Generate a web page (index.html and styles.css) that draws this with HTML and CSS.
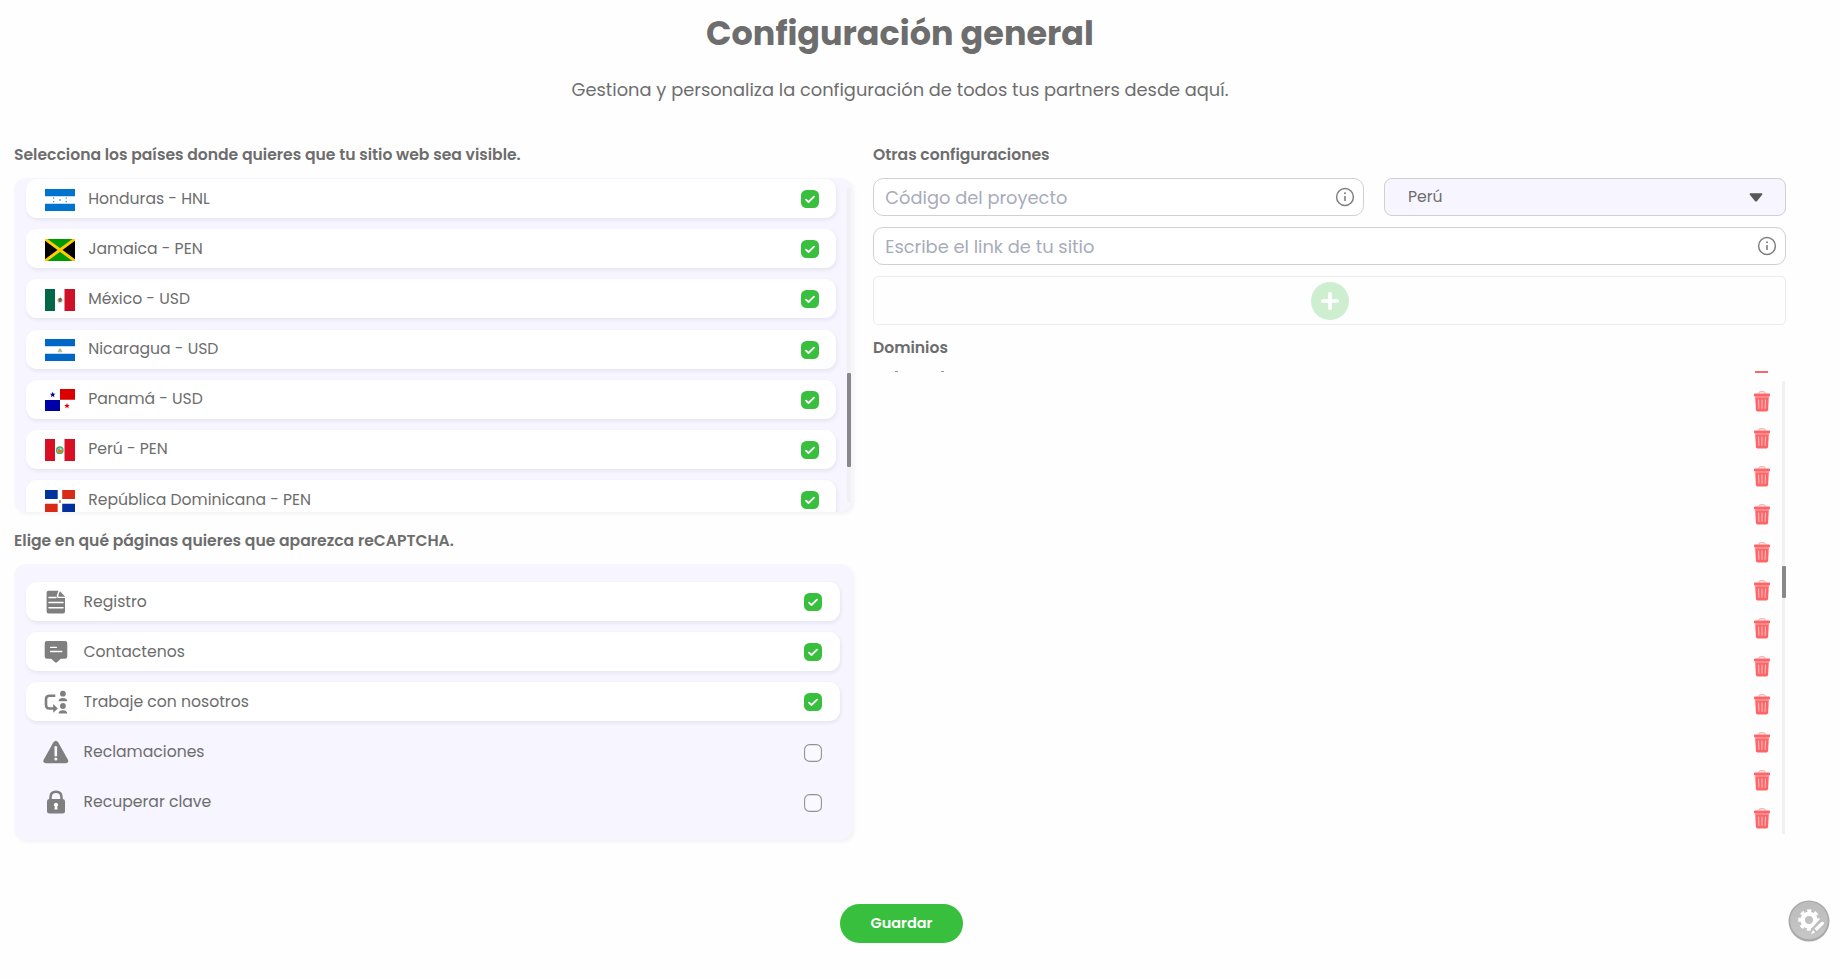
FILE: index.html
```html
<!DOCTYPE html>
<html lang="es">
<head>
<meta charset="utf-8">
<title>Configuración general</title>
<link rel="stylesheet" href="styles.css">
</head>
<body>
<svg class="defs" aria-hidden="true">
  <symbol id="check" viewBox="0 0 18 18"><rect width="18" height="18" rx="5.500" fill="#38bf3e"/><path d="M5 9.600 7.500 12 13 6.700" fill="none" stroke="#fff" stroke-width="1.800" stroke-linecap="round" stroke-linejoin="round"/></symbol>
  <symbol id="box" viewBox="0 0 18 18"><rect x=".6" y=".6" width="16.800" height="16.800" rx="5" fill="#faf9ff" stroke="#929292" stroke-width="1.100"/></symbol>
  <symbol id="info" viewBox="0 0 20 20"><circle cx="10" cy="10" r="8.400" fill="none" stroke="#7f7f7f" stroke-width="1.500"/><circle cx="10" cy="6.300" r="1" fill="#7f7f7f"/><path d="M10 9v5" stroke="#7f7f7f" stroke-width="1.600"/></symbol>
  <symbol id="trash" viewBox="0 0 16 21"><path d="M5 2.500V1.700Q5 .8 6 .8h4q1 0 1 .9v.8" fill="none" stroke="#ff9a9a" stroke-width="1"/><path d="M.8 2.500h14.400q.8 0 .8.800V5H0V3.300q0-.8.800-.8z" fill="#ff6467"/><path d="M.7 5h14.600v1.700H.7z" fill="#ff8d8f"/><path d="M1.200 6.500h13.600l-.7 12.300q-.1 1.700-1.600 1.700h-9q-1.500 0-1.600-1.700z" fill="#ff6467"/><path d="m4.500 8.500.4 9.200M8 8.500v9.200M11.500 8.500l-.4 9.200" stroke="#ffb5b5" stroke-width="1.200"/></symbol>
</svg>
<main class="page">
  <header class="head">
    <h1>Configuración general</h1>
    <p>Gestiona y personaliza la configuración de todos tus partners desde aquí.</p>
  </header>
  <div class="columns">
    <section class="left">
      <h2 class="h-paises">Selecciona los países donde quieres que tu sitio web sea visible.</h2>
      <div class="panel countries">
        <div class="rows">
          <div class="row"><svg class="flag" viewBox="0 0 30 22"><path fill="#fff" d="M0 0h30v22H0z"/><path fill="#0073cf" d="M0 0h30v7.300H0zM0 14.700h30V22H0z"/><path fill="#0073cf" d="M8 8.500h1.300v1.300H8zM8 12h1.300v1.300H8zM14.300 10.300h1.500v1.500h-1.500zM20.600 8.500h1.300v1.300h-1.300zM20.600 12h1.300v1.300h-1.300z" opacity=".75"/></svg><span>Honduras - HNL</span><svg class="tick"><use href="#check"/></svg></div>
          <div class="row"><svg class="flag" viewBox="0 0 30 22"><path fill="#090" d="M0 0h30v22H0z"/><path d="M0 0l15 11L0 22zM30 0 15 11l15 11z"/><path d="m0 0 30 22M30 0 0 22" stroke="#fc0" stroke-width="3"/></svg><span>Jamaica - PEN</span><svg class="tick"><use href="#check"/></svg></div>
          <div class="row"><svg class="flag" viewBox="0 0 30 22"><path fill="#fff" d="M0 0h30v22H0z"/><path fill="#006847" d="M0 0h10v22H0z"/><path fill="#ce1126" d="M19.500 0H30v22H19.500z"/><circle cx="15" cy="11.200" r="2.500" fill="#b5b99a"/><path d="m13.500 10 2-1.500 1.500 2-1 2-2 .5z" fill="#80603d"/></svg><span>México - USD</span><svg class="tick"><use href="#check"/></svg></div>
          <div class="row"><svg class="flag" viewBox="0 0 30 22"><path fill="#fff" d="M0 0h30v22H0z"/><path fill="#0067c6" d="M0 0h30v7.300H0zM0 14.700h30V22H0z"/><path fill="#a5bf7a" d="m15 8.800 2.500 4h-5z"/><path fill="#c8b98c" d="M12.800 12.400h4.400v.8h-4.400z"/></svg><span>Nicaragua - USD</span><svg class="tick"><use href="#check"/></svg></div>
          <div class="row"><svg class="flag" viewBox="0 0 30 22"><path fill="#fff" d="M0 0h30v22H0z"/><path fill="#db0000" d="M15 0h15v10.700H15z"/><path fill="#0000ab" d="M0 11h15v11H0z"/><path fill="#0000ab" d="m7.700 2.800.8 2h2.100L8.900 6.100l.6 2.100-1.800-1.300-1.800 1.300.6-2.100-1.700-1.300h2.100z"/><path fill="#d80000" d="m22 14 .8 2h2.100l-1.700 1.300.6 2.100-1.800-1.300-1.800 1.300.6-2.100-1.700-1.300h2.100z"/></svg><span>Panamá - USD</span><svg class="tick"><use href="#check"/></svg></div>
          <div class="row"><svg class="flag" viewBox="0 0 30 22"><path fill="#fff" d="M0 0h30v22H0z"/><path fill="#d91023" d="M0 0h10v22H0zM19.500 0H30v22H19.500z"/><circle cx="14.800" cy="11.200" r="3.200" fill="#b9d9b0" stroke="#55a85a" stroke-width="1.400"/><path d="M13 11h4v2.500h-4z" fill="#d8772e"/><path d="M13 9.500h2V11h-2z" fill="#5c9ecb"/></svg><span>Perú - PEN</span><svg class="tick"><use href="#check"/></svg></div>
          <div class="row"><svg class="flag" viewBox="0 0 30 22"><path fill="#fff" d="M0 0h30v22H0z"/><path fill="#00319c" d="M0 0h12.700v9H0zM17.200 13.700H30V22H17.200z"/><path fill="#d82a17" d="M17.200 0H30v9H17.200zM0 13.700h12.700V22H0z"/><path fill="#c39b8c" d="M14 10h2v3h-2z"/></svg><span>República Dominicana - PEN</span><svg class="tick"><use href="#check"/></svg></div>
        </div>
        <div class="track"><i></i></div>
      </div>
      <h2 class="h-captcha">Elige en qué páginas quieres que aparezca reCAPTCHA.</h2>
      <div class="panel captcha">
        <div class="row"><svg class="ico" viewBox="0 0 26 24"><path fill="#7f7f7f" d="M5.500.8H15.500l-1.700 4.400q-.4 2.800 2.400 2.800h5.800v13.500q0 1.900-1.900 1.900H5.500q-1.900 0-1.900-1.900V2.700Q3.600.8 5.500.8zM17 1.200l5.200 5.600H15.300q.2-3.500 1.700-5.600z"/><path d="M6 7.500h7M6 12.500h14M6 17.800h14" stroke="#fff" stroke-width="1.500" stroke-linecap="round"/></svg><span>Registro</span><svg class="tick"><use href="#check"/></svg></div>
        <div class="row"><svg class="ico" viewBox="0 0 26 24"><path fill="#7f7f7f" d="M4 1h18q2.300 0 2.300 2.300v13.200q0 2.300-2.300 2.300h-4.200L14 22.300q-1 .9-2 0l-3.800-3.500H4q-2.300 0-2.300-2.300V3.300Q1.700 1 4 1z"/><path d="M7.500 7.300h6M7.500 11.500h11.300" stroke="#fff" stroke-width="1.300" stroke-linecap="round"/></svg><span>Contactenos</span><svg class="tick"><use href="#check"/></svg></div>
        <div class="row"><svg class="ico" viewBox="0 0 26 24"><path d="M12.300 5.800H6.500Q3 5.800 3 9.300V15q0 3.500 3.500 3.500h5" fill="none" stroke="#7f7f7f" stroke-width="2.600"/><path fill="#7f7f7f" d="m10.200 14.100 4.600 4.300-4.600 4.300zM15.500 11.200q.5-3.200 4.400-3.200t4.400 3.200zM15.500 23.500q.5-3.200 4.400-3.200t4.400 3.200z"/><circle cx="19.900" cy="3.700" r="2.900" fill="#7f7f7f"/><circle cx="19.900" cy="16" r="2.900" fill="#7f7f7f"/></svg><span>Trabaje con nosotros</span><svg class="tick"><use href="#check"/></svg></div>
        <div class="row off"><svg class="ico" viewBox="0 0 26 24"><path fill="#7f7f7f" d="M10.300 2.500q2.500-3.700 5 0l9.500 17q1.500 3.500-2 3.700h-20q-3.500-.2-2-3.700z"/><path d="M12.800 7.200v8" stroke="#f7f5ff" stroke-width="2.600" stroke-linecap="round"/><circle cx="12.800" cy="19" r="1.500" fill="#f7f5ff"/></svg><span>Reclamaciones</span><svg class="tick"><use href="#box"/></svg></div>
        <div class="row off"><svg class="ico" viewBox="0 0 26 24"><path d="M7.500 10V7.200q0-5.500 5.500-5.500t5.500 5.500V10" fill="none" stroke="#7f7f7f" stroke-width="2.500"/><rect x="4" y="9" width="18" height="14.500" rx="2.500" fill="#7f7f7f"/><path fill="#fff" d="M13 12.800a2.200 2.200 0 0 1 1.200 4l.4 2.700h-3.200l.4-2.700a2.200 2.200 0 0 1 1.200-4z"/></svg><span>Recuperar clave</span><svg class="tick"><use href="#box"/></svg></div>
      </div>
    </section>
    <section class="right">
      <h2 class="h-otras">Otras configuraciones</h2>
      <div class="fields">
        <div class="field code"><span>Código del proyecto</span><svg class="info"><use href="#info"/></svg></div>
        <div class="select"><span>Perú</span><svg viewBox="0 0 14 9"><path d="M1.500.3h11q1.500.2.600 1.500L8.100 7.900q-1.100 1.200-2.200 0L.9 1.800Q0 .5 1.500.3z" fill="#575757"/></svg></div>
      </div>
      <div class="field link"><span>Escribe el link de tu sitio</span><svg class="info"><use href="#info"/></svg></div>
      <div class="add"><svg viewBox="0 0 38 38"><circle cx="19" cy="19" r="19" fill="#cdeecf"/><path d="M19 11.600v14.800M11.600 19h14.800" stroke="#fff" stroke-width="3.600" stroke-linecap="round"/></svg></div>
      <h2 class="h-dominios">Dominios</h2>
      <div class="domains">
        <div class="remnants"><i></i><i></i><b></b></div>
        <div class="bins">
          <svg><use href="#trash"/></svg><svg><use href="#trash"/></svg><svg><use href="#trash"/></svg><svg><use href="#trash"/></svg><svg><use href="#trash"/></svg><svg><use href="#trash"/></svg><svg><use href="#trash"/></svg><svg><use href="#trash"/></svg><svg><use href="#trash"/></svg><svg><use href="#trash"/></svg><svg><use href="#trash"/></svg><svg><use href="#trash"/></svg>
        </div>
        <div class="track"><i></i></div>
      </div>
    </section>
  </div>
  <button class="save">Guardar</button>
</main>
<svg class="gear" viewBox="0 0 42 42">
  <defs><linearGradient id="g" x2="0" y2="1"><stop stop-color="#bcbcbc"/><stop offset="1" stop-color="#c6c6c6"/></linearGradient></defs>
  <circle cx="21" cy="21" r="20.500" fill="#a9a9a9"/><circle cx="21" cy="20.500" r="18.800" fill="url(#g)"/>
  <circle cx="21" cy="20" r="6.300" fill="none" stroke="#fff" stroke-width="4.600"/>
  <circle cx="21" cy="20" r="9" fill="none" stroke="#fff" stroke-width="3.600" stroke-dasharray="3.900 3.169" stroke-dashoffset="1.950"/>
  <path d="m21.500 35 1.500-6 8.500-9.500 6 4.500-9 9z" fill="#bfbfbf"/>
  <path d="m26.500 28.500 6.500-6.200q1.300-1.200 2.500-.2 1.200 1.200 0 2.500l-6.800 6.600zM25 30l2.300 2.500-4.600 1.800z" fill="#fff"/>
</svg>
</body>
</html>
```
FILE: styles.css
```css
* { box-sizing: border-box; }
body { margin: 0; height: 979px; overflow: hidden; background: #fefefe; color: #6d6d6d; font-family: Poppins, Inter, "Open Sans", sans-serif; }
.defs { position: absolute; width: 0; height: 0; }
svg { display: block; flex: none; }
h1, h2, p { margin: 0; white-space: nowrap; }
.page { width: 1772px; margin-left: 14px; display: flex; flex-direction: column; }
.head { height: 142px; text-align: center; }
h1 { padding-top: 13px; font-size: 33.450px; line-height: 42px; font-weight: 700; }
.head p { padding-top: 22px; font-size: 17.830px; line-height: 26px; }
h2 { font-size: 15.600px; line-height: 24px; font-weight: 600; }
.columns { display: flex; gap: 21.500px; height: 762px; }
.left { width: 837.500px; }
.right { width: 913px; }
.panel { background: #f7f5ff; border-radius: 12px; box-shadow: 2px 2px 4px rgba(0,0,0,.05); }
.h-paises, .h-otras { height: 36px; padding-top: 1px; }
.countries { height: 334px; display: flex; justify-content: space-between; overflow: hidden; padding: 1px 0 0 11.500px; }
.rows { width: 810px; display: flex; flex-direction: column; gap: 11.200px; }
.row { display: flex; align-items: center; height: 39px; flex: none; padding: 0 17px 0 19.500px; background: #fff; border-radius: 11px; box-shadow: 1px 2px 4px rgba(0,0,0,.07); font-size: 15.650px; white-space: nowrap; }
.row span { line-height: 24px; flex: 1; }
.flag { width: 30px; height: 22px; margin: 2px 13.200px 0 0; }
.tick { width: 18px; height: 18px; margin-top: 1px; }
.track { background: #f1f1f1; }
.track i { display: block; background: #888; }
.countries .track { width: 4px; height: 314px; margin: 9px 1px 0 0; padding-top: 185px; }
.countries .track i { height: 94px; border-radius: 1px; }
.h-captcha { height: 52px; padding-top: 17px; }
.captcha { height: 276px; padding: 18px 12px 0 11.500px; display: flex; flex-direction: column; gap: 11.200px; }
.captcha .row { padding-left: 17px; padding-right: 17.500px; }
.ico { width: 26px; height: 24px; margin-right: 15px; }
.row.off { background: none; box-shadow: none; }
.fields { display: flex; gap: 20px; margin-bottom: 11px; }
.field { height: 38px; display: flex; align-items: center; justify-content: space-between; padding: 0 8px 0 11.300px; border: 1px solid #d0d0d0; border-radius: 10px; background: #fff; color: #a7abba; font-size: 17.830px; }
.code { width: 491px; }
.info { width: 20px; height: 20px; }
.select { width: 402px; height: 38px; display: flex; align-items: center; justify-content: space-between; padding: 0 22px 0 23px; border: 1px solid #d0d0d0; border-radius: 8px; background: #f7f5ff; font-size: 15.650px; }
.select span { margin-top: -2px; }
.select svg { width: 14px; height: 9px; }
.add { height: 49px; margin-top: 11px; border: 1px solid #ebebeb; border-radius: 5px; display: flex; align-items: center; justify-content: center; }
.add svg { width: 38px; height: 38px; }
.h-dominios { padding-top: 11px; height: 46px; }
.domains { display: grid; grid-template-columns: 1fr 16px 4px; column-gap: 12px; height: 463px; }
.remnants { grid-column: 1 / 3; grid-row: 1; display: flex; height: 2px; }
.remnants i { width: 3px; height: 1px; margin-left: 22px; background: #999; }
.remnants i + i { margin-left: 43px; }
.remnants b { width: 13px; height: 2px; margin-left: auto; margin-right: 2px; background: #ff6467; }
.bins { grid-column: 2; grid-row: 1; padding-top: 19.500px; display: flex; flex-direction: column; gap: 16.950px; }
.bins svg { width: 16px; height: 21px; }
.domains .track { grid-column: 3; grid-row: 1; width: 3px; height: 453px; margin-top: 10px; padding-top: 185px; }
.domains .track i { width: 4px; height: 32px; border-radius: 1px; }
.save { align-self: center; margin-left: 3px; width: 123px; height: 39px; border: 0; border-radius: 20px; background: #38bf3e; color: #fff; font: 600 14.500px Poppins, Inter, sans-serif; }
.gear { position: absolute; left: 1788px; top: 900px; width: 42px; height: 42px; }
```
